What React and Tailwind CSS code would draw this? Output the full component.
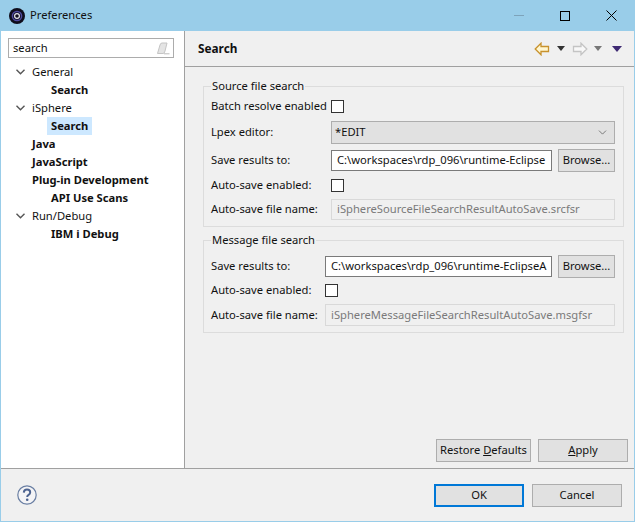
import React from "react";
import { ChevronDown } from "lucide-react";

const font = "font-['Noto_Sans',sans-serif]";

const treeItems = [
  { label: "General", level: 0, open: true },
  { label: "Search", level: 1, bold: true },
  { label: "iSphere", level: 0, open: true },
  { label: "Search", level: 1, bold: true, selected: true },
  { label: "Java", level: 0, bold: true },
  { label: "JavaScript", level: 0, bold: true },
  { label: "Plug-in Development", level: 0, bold: true },
  { label: "API Use Scans", level: 1, bold: true },
  { label: "Run/Debug", level: 0, open: true },
  { label: "IBM i Debug", level: 1, bold: true },
];

function AppIcon() {
  return (
    <svg width="16" height="16" viewBox="0 0 16 16" className="shrink-0">
      <circle cx="8" cy="8" r="8" fill="#0f0d1c" />
      <circle cx="8" cy="8" r="4.6" fill="none" stroke="#4f4a9e" strokeWidth="1.5" />
      <circle cx="8" cy="8" r="2.4" fill="none" stroke="#e4e4ee" strokeWidth="1.2" />
    </svg>
  );
}

function TreeRow({ item }) {
  return (
    <div className={`flex h-[18px] items-center ${item.level === 0 ? "pl-[15px]" : "pl-[38px]"}`}>
      {item.level === 0 && (
        <span className="flex w-[16px] shrink-0 justify-start">
          {item.open && (
            <svg width="9" height="6" viewBox="0 0 9 6">
              <path d="M0.5 0.8 L4.5 4.8 L8.5 0.8" fill="none" stroke="#555" strokeWidth="1.4" />
            </svg>
          )}
        </span>
      )}
      <span
        className={`flex h-[18px] items-center whitespace-nowrap px-[4px] text-[11.2px] ${
          item.level === 0 ? "-ml-[4px]" : "ml-[8px]"
        } ${item.bold ? "font-bold" : ""} ${item.selected ? "bg-[#cde8ff]" : ""}`}
      >
        {item.label}
      </span>
    </div>
  );
}

function Button({ className = "", children }) {
  return (
    <button className={`flex items-center justify-center bg-[#e1e1e1] text-[11.2px] text-[#111] ${className}`}>
      {children}
    </button>
  );
}

function Checkbox() {
  return <span className="block h-[13px] w-[13px] border border-[#333] bg-white" />;
}

function TextInput({ value, disabled, className = "" }) {
  return (
    <div
      className={`flex items-center overflow-hidden whitespace-nowrap border px-[5px] text-[11.2px] ${
        disabled ? "border-[#d9d9d9] bg-[#f0f0f0] text-[#7a7a7a]" : "border-[#7a7a7a] bg-white text-[#111]"
      } ${className}`}
    >
      <span className="shrink-0">{value}</span>
    </div>
  );
}

function Group({ title, children, className = "" }) {
  return (
    <fieldset className={`border border-[#dcdcdc] px-[7px] ${className}`}>
      <legend className="px-[1px] text-[11.2px] leading-[14px]">{title}</legend>
      {children}
    </fieldset>
  );
}

export default function App() {
  return (
    <div className={`flex h-[522px] w-[635px] flex-col border-x border-b border-[#99cde9] bg-[#f0f0f0] text-[#111] ${font}`}>
      {/* title bar */}
      <div className="-mx-px flex h-[31px] shrink-0 items-center bg-[#99cde9] pl-[9px] pr-[1px]">
        <AppIcon />
        <span className="ml-[5px] text-[11.2px]">Preferences</span>
        <div className="ml-auto flex items-center">
          <span className="flex w-[46px] justify-center">
            <span className="block h-px w-[10px] bg-[#7da3ba]" />
          </span>
          <span className="flex w-[46px] justify-center">
            <span className="block h-[10px] w-[10px] border border-black" />
          </span>
          <span className="flex w-[46px] justify-center">
            <svg width="11" height="11" viewBox="0 0 11 11">
              <path d="M0.5 0.5 L10.5 10.5 M10.5 0.5 L0.5 10.5" stroke="#000" strokeWidth="1" />
            </svg>
          </span>
        </div>
      </div>

      <div className="flex min-h-0 flex-1">
        {/* left tree */}
        <div className="w-[184px] shrink-0 border-r border-[#a0a0a0] bg-white pt-[7px]">
          <div className="ml-[7px] flex h-[20px] w-[166px] items-center border border-[#acacac] pl-[4px] pr-[3px] text-[11.2px]">
            search
            <svg width="14" height="13" viewBox="0 0 14 13" className="ml-auto">
              <path d="M1.5 11.5 L4 3 Q4.5 1 6 1 L11 1 L9 9 Q8.5 11.5 7 11.5 Z" fill="#e4e4e4" stroke="#c4c4c4" />
              <path d="M8 11.8 H13.5" stroke="#bbb" />
            </svg>
          </div>
          <div className="mt-[5px]">
            {treeItems.map((item, i) => (
              <TreeRow key={i} item={item} />
            ))}
          </div>
        </div>

        {/* right pane */}
        <div className="flex min-w-0 flex-1 flex-col">
          <div className="flex h-[36px] shrink-0 items-center border-b border-[#a0a0a0] pl-[13px] pr-[12px]">
            <span className="text-[11.8px] font-bold">Search</span>
            <div className="ml-auto flex items-center">
              <svg width="16" height="14" viewBox="0 0 16 14">
                <path d="M1.2 7 L7 1.2 V4.5 H14.5 V9.5 H7 V12.8 Z" fill="#fff6cf" stroke="#c8922e" strokeWidth="1.3" />
              </svg>
              <svg width="8" height="5" viewBox="0 0 8 5" className="ml-[7px]">
                <path d="M0 0 H8 L4 5 Z" fill="#333" />
              </svg>
              <svg width="16" height="14" viewBox="0 0 16 14" className="ml-[7px]">
                <path d="M14.8 7 L9 1.2 V4.5 H1.5 V9.5 H9 V12.8 Z" fill="#f8f8f8" stroke="#c4c4c4" strokeWidth="1.3" />
              </svg>
              <svg width="8" height="5" viewBox="0 0 8 5" className="ml-[6px]">
                <path d="M0 0 H8 L4 5 Z" fill="#777" />
              </svg>
              <svg width="10" height="6" viewBox="0 0 10 6" className="ml-[10px]">
                <path d="M0 0 H10 L5 6 Z" fill="#3f2a73" />
              </svg>
            </div>
          </div>

          <div className="flex min-h-0 flex-1 flex-col px-[18px] pt-[12px]">
            <Group title="Source file search" className="w-[421px] pb-[2px]">
              <div className="grid grid-cols-[120px_1fr] items-center text-[11.2px]">
                <span className="flex h-[26px] items-center">Batch resolve enabled</span>
                <div className="flex h-[26px] items-center"><Checkbox /></div>
                <span className="flex h-[26px] items-center">Lpex editor:</span>
                <div className="flex h-[26px] items-center">
                  <div className="flex h-[23px] w-[284px] items-center justify-between border border-[#adadad] bg-[#e1e1e1] pl-[3px] pr-[5px]">
                    *EDIT
                    <ChevronDown size={13} strokeWidth={1.2} color="#444" />
                  </div>
                </div>
                <span className="flex h-[31px] items-center">Save results to:</span>
                <div className="flex h-[31px] items-center">
                  <TextInput value="C:\workspaces\rdp_096\runtime-Eclipse" className="h-[21px] w-[221px]" />
                  <Button className="ml-[6px] h-[23px] w-[57px] border border-[#adadad]">Browse...</Button>
                </div>
                <span className="flex h-[19px] items-center">Auto-save enabled:</span>
                <div className="flex h-[19px] items-center"><Checkbox /></div>
                <span className="flex h-[29px] items-center">Auto-save file name:</span>
                <div className="flex h-[29px] items-center">
                  <TextInput disabled value="iSphereSourceFileSearchResultAutoSave.srcfsr" className="h-[21px] w-[284px]" />
                </div>
              </div>
            </Group>

            <Group title="Message file search" className="mt-[6px] w-[421px] pb-[5px]">
              <div className="grid grid-cols-[114px_1fr] items-center pt-[7px] text-[11.2px]">
                <span className="flex h-[24px] items-center">Save results to:</span>
                <div className="flex h-[24px] items-center">
                  <TextInput value="C:\workspaces\rdp_096\runtime-EclipseA" className="h-[21px] w-[227px]" />
                  <Button className="ml-[6px] h-[23px] w-[57px] border border-[#adadad]">Browse...</Button>
                </div>
                <span className="flex h-[25px] items-center">Auto-save enabled:</span>
                <div className="flex h-[25px] items-center"><Checkbox /></div>
                <span className="flex h-[24px] items-center">Auto-save file name:</span>
                <div className="flex h-[24px] items-center">
                  <TextInput disabled value="iSphereMessageFileSearchResultAutoSave.msgfsr" className="h-[22px] w-[290px]" />
                </div>
              </div>
            </Group>

            <div className="mt-auto flex justify-end gap-[7px] pb-[6px]">
              <Button className="h-[23px] w-[95px] border border-[#adadad]">
                <span>Restore <u>D</u>efaults</span>
              </Button>
              <Button className="-mr-[12px] h-[23px] w-[90px] border border-[#adadad]">
                <span><u>A</u>pply</span>
              </Button>
            </div>
          </div>
        </div>
      </div>

      {/* bottom bar */}
      <div className="flex h-[53px] shrink-0 items-center border-t border-[#a0a0a0] pl-[16px] pr-[12px]">
        <svg width="20" height="20" viewBox="0 0 20 20">
          <circle cx="10" cy="10" r="9.2" fill="#f4f4f6" stroke="#6a7fa3" strokeWidth="1.2" />
          <path d="M6.8 7.6 Q7 4.6 10 4.6 Q13.2 4.6 13.2 7.3 Q13.2 8.9 11.6 9.8 Q10.2 10.6 10.2 12" fill="none" stroke="#4d6390" strokeWidth="2" />
          <circle cx="10.2" cy="14.8" r="1.3" fill="#4d6390" />
        </svg>
        <Button className="ml-auto h-[23px] w-[90px] border-2 border-[#0078d7]">OK</Button>
        <Button className="ml-[8px] h-[23px] w-[90px] border border-[#adadad]">Cancel</Button>
      </div>
    </div>
  );
}
